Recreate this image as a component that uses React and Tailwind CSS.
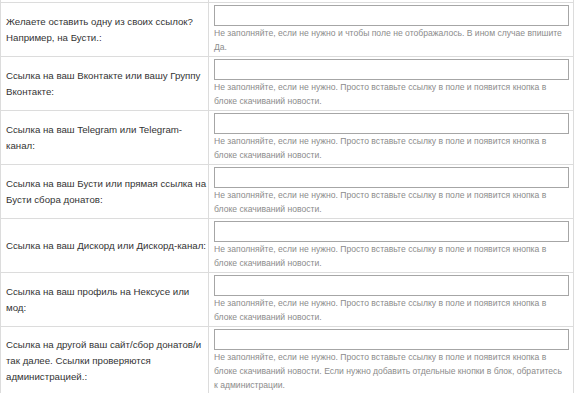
import React from "react";

const helpShort = [
  "Не заполняйте, если не нужно. Просто вставьте ссылку в поле и появится кнопка в",
  "блоке скачиваний новости.",
];

const rows = [
  {
    label: ["Желаете оставить одну из своих ссылок?", "Например, на Бусти.:"],
    help: [
      "Не заполняйте, если не нужно и чтобы поле не отображалось. В ином случае впишите",
      "Да.",
    ],
  },
  { label: ["Ссылка на ваш Вконтакте или вашу Группу", "Вконтакте:"], help: helpShort },
  { label: ["Ссылка на ваш Telegram или Telegram-", "канал:"], help: helpShort },
  { label: ["Ссылка на ваш Бусти или прямая ссылка на", "Бусти сбора донатов:"], help: helpShort },
  { label: ["Ссылка на ваш Дискорд или Дискорд-канал:"], help: helpShort },
  { label: ["Ссылка на ваш профиль на Нексусе или", "мод:"], help: helpShort },
  {
    label: ["Ссылка на другой ваш сайт/сбор донатов/и", "так далее. Ссылки проверяются", "администрацией.:"],
    help: [
      "Не заполняйте, если не нужно. Просто вставьте ссылку в поле и появится кнопка в",
      "блоке скачиваний новости. Если нужно добавить отдельные кнопки в блок, обратитесь",
      "к администрации.",
    ],
  },
];

const FormRow = ({ label, help }) => {
  return (
    <div className="flex border-t border-[#dcdcdc]">
      <div className="w-[208px] shrink-0 border-r border-[#dcdcdc] px-[5px] flex items-center text-[9.7px] leading-[16px] text-[#333]">
        <p>
          {label.map((line, i) => (
            <span key={i} className="block whitespace-nowrap">
              {line}
            </span>
          ))}
        </p>
      </div>
      <div className="flex-1 min-w-0 pl-[5px] pr-[4px] pt-[2px] pb-[2px]">
        <input
          type="text"
          className="block w-full min-w-0 h-[21px] border border-[#a6a6a6] bg-white outline-none"
        />
        <p className="text-[8.6px] leading-[14px] text-[#8c8c8c]">
          {help.map((line, i) => (
            <span key={i} className="block whitespace-nowrap">
              {line}
            </span>
          ))}
        </p>
      </div>
    </div>
  );
};

export default function App() {
  return (
    <div
      className="w-[575px] h-[393px] overflow-hidden bg-white"
      style={{ fontFamily: '"Liberation Sans", Arial, sans-serif' }}
    >
      <div className="w-[574px] border-l border-r border-[#dcdcdc]">
        {/* tail of the row above */}
        <div className="flex h-[2px]">
          <div className="w-[208px] border-r border-[#dcdcdc]"></div>
        </div>
        {rows.map((row, i) => (
          <FormRow key={i} label={row.label} help={row.help} />
        ))}
      </div>
    </div>
  );
}
